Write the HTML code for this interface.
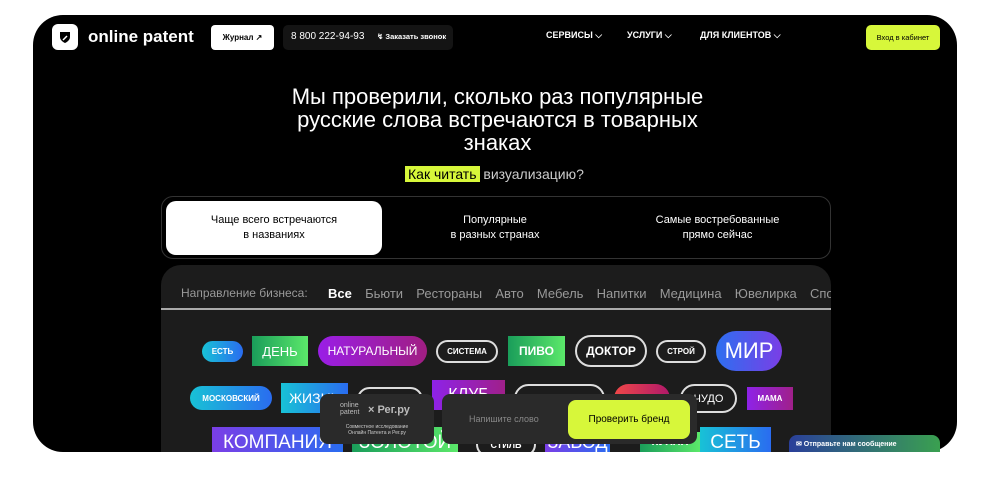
<!DOCTYPE html>
<html><head><meta charset="utf-8"><style>
*{margin:0;padding:0;box-sizing:border-box}
body{width:999px;height:492px;background:#fff;font-family:"Liberation Sans",sans-serif;position:relative;overflow:hidden}
.main{position:absolute;left:33px;top:15px;width:924px;height:437px;background:#000;border-radius:30px;overflow:hidden}
.a{position:absolute}
.c{display:flex;align-items:center;justify-content:center;color:#fff;font-weight:bold;white-space:nowrap;overflow:hidden}
.o{border:2px solid #ddd;border-radius:20px}
.p{border-radius:20px}
.nav{color:#fff;font-size:9px;font-weight:bold;top:30px}
</style></head><body>
<div class="main"></div>
<!-- header -->
<div class="a" style="left:52px;top:24px;width:26px;height:26px;background:#fff;border-radius:6px"></div>
<svg class="a" style="left:58px;top:30px" width="14" height="14" viewBox="0 0 14 14"><path d="M2 2h10v5c0 3-3 5-5 6-2-1-5-3-5-6z" fill="#000"/><path d="M5 10l4-4" stroke="#fff" stroke-width="1.5"/></svg>
<div class="a" style="left:88px;top:27px;color:#fff;font-size:17px;font-weight:bold">online patent</div>
<div class="a c" style="left:211px;top:25px;width:63px;height:25px;background:#fff;border-radius:4px;color:#000;font-size:8px">Журнал&nbsp;↗</div>
<div class="a" style="left:283px;top:25px;width:170px;height:25px;background:#141414;border-radius:5px"></div>
<div class="a" style="left:291px;top:31px;color:#fff;font-size:10px">8 800 222-94-93</div>
<div class="a" style="left:377px;top:32px;color:#fff;font-size:7.5px;font-weight:bold">↯ Заказать звонок</div>
<div class="a nav" style="left:546px">СЕРВИСЫ ⌵</div>
<div class="a nav" style="left:627px">УСЛУГИ ⌵</div>
<div class="a nav" style="left:700px">ДЛЯ КЛИЕНТОВ ⌵</div>
<div class="a c" style="left:866px;top:25px;width:74px;height:25px;background:#d7f73a;border-radius:5px;color:#000;font-size:7.5px;font-weight:normal">Вход в кабинет</div>
<!-- title -->
<div class="a" style="left:200px;top:85px;width:595px;text-align:center;color:#fff;font-size:22px;line-height:23px">Мы проверили, сколько раз популярные<br>русские слова встречаются в товарных<br>знаках</div>
<div class="a" style="left:405px;top:166px;color:#ccc;font-size:14px"><span style="background:#d7f73a;color:#000;padding:0 3px">Как читать</span> визуализацию?</div>
<!-- tabs -->
<div class="a" style="left:161px;top:196px;width:670px;height:63px;border:1px solid #333;border-radius:12px"></div>
<div class="a c" style="left:166px;top:201px;width:216px;height:54px;background:#fff;border-radius:10px;color:#000;font-size:11px;font-weight:normal;text-align:center;line-height:15px">Чаще всего встречаются<br>в названиях</div>
<div class="a c" style="left:400px;top:201px;width:190px;height:54px;font-size:11px;font-weight:normal;text-align:center;line-height:15px">Популярные<br>в разных странах</div>
<div class="a c" style="left:620px;top:201px;width:195px;height:54px;font-size:11px;font-weight:normal;text-align:center;line-height:15px">Самые востребованные<br>прямо сейчас</div>
<!-- panel -->
<div class="a" style="left:161px;top:265px;width:670px;height:200px;background:#1c1c1c;border-radius:20px 20px 0 0;overflow:hidden">
<div class="a" style="left:20px;top:21px;color:#999;font-size:12px;white-space:nowrap">Направление бизнеса:</div>
<div class="a" style="left:167px;top:21px;color:#999;font-size:13px;white-space:nowrap;word-spacing:3px"><b style="color:#fff">Все</b>&nbsp; Бьюти &nbsp;Рестораны &nbsp;Авто &nbsp;Мебель &nbsp;Напитки &nbsp;Медицина &nbsp;Ювелирка &nbsp;Спорт</div>
<div class="a" style="left:0;top:43px;width:670px;height:2px;background:#aaa"></div>
</div>
<!-- words row1 -->
<div class="a c p" style="left:202px;top:341px;width:41px;height:21px;background:linear-gradient(90deg,#18c2d6,#2a6cf0);font-size:8px">ЕСТЬ</div>
<div class="a c" style="left:252px;top:336px;width:56px;height:30px;background:linear-gradient(90deg,#1a9d5a,#5be86a);font-size:13px;font-weight:normal">ДЕНЬ</div>
<div class="a c p" style="left:318px;top:336px;width:109px;height:30px;background:linear-gradient(90deg,#9a1ee6,#a01e82);font-size:12px;font-weight:normal">НАТУРАЛЬНЫЙ</div>
<div class="a c o" style="left:436px;top:340px;width:62px;height:23px;font-size:8px">СИСТЕМА</div>
<div class="a c" style="left:508px;top:336px;width:57px;height:30px;background:linear-gradient(90deg,#1a9d5a,#5be86a);font-size:12px">ПИВО</div>
<div class="a c o" style="left:575px;top:335px;width:72px;height:32px;font-size:12px">ДОКТОР</div>
<div class="a c o" style="left:656px;top:340px;width:50px;height:23px;font-size:8px">СТРОЙ</div>
<div class="a c p" style="left:716px;top:331px;width:66px;height:40px;background:linear-gradient(90deg,#2d6ff0,#7a3ee6);font-size:22px;font-weight:normal">МИР</div>
<!-- row2 -->
<div class="a c p" style="left:190px;top:386px;width:82px;height:24px;background:linear-gradient(90deg,#18c2d6,#2a6cf0);font-size:8px">МОСКОВСКИЙ</div>
<div class="a c" style="left:281px;top:383px;width:67px;height:30px;background:linear-gradient(90deg,#18c2d6,#2a6cf0);font-size:14px;font-weight:normal">ЖИЗНЬ</div>
<div class="a o" style="left:357px;top:387px;width:66px;height:25px"></div>
<div class="a c" style="left:432px;top:380px;width:73px;height:30px;background:linear-gradient(90deg,#8e22e8,#a0208a);font-size:16px;font-weight:normal">КЛУБ</div>
<div class="a o" style="left:514px;top:384px;width:91px;height:29px"></div>
<div class="a p" style="left:614px;top:384px;width:56px;height:29px;background:linear-gradient(90deg,#f04848,#b0186a)"></div>
<div class="a c o" style="left:680px;top:384px;width:57px;height:29px;font-size:11px;font-weight:normal">ЧУДО</div>
<div class="a c" style="left:747px;top:387px;width:46px;height:23px;background:linear-gradient(90deg,#8e22e8,#a0208a);font-size:8px">МАМА</div>
<!-- row3 -->
<div class="a c" style="left:212px;top:427px;width:131px;height:30px;background:linear-gradient(90deg,#7a3ee6,#2a6cf0);font-size:19px;font-weight:normal;align-items:flex-start;padding-top:5px">КОМПАНИЯ</div>
<div class="a c" style="left:352px;top:427px;width:106px;height:30px;background:linear-gradient(90deg,#1a9d5a,#5be86a);font-size:19px;font-weight:normal;align-items:flex-start;padding-top:5px">ЗОЛОТОЙ</div>
<div class="a c o" style="left:476px;top:432px;width:60px;height:25px;font-size:9px">СТИЛЬ</div>
<div class="a c" style="left:545px;top:427px;width:65px;height:30px;background:linear-gradient(90deg,#7a3ee6,#2a6cf0);font-size:18px;font-weight:normal;align-items:flex-start;padding-top:5px">ЗАВОД</div>
<div class="a c" style="left:640px;top:432px;width:60px;height:25px;background:linear-gradient(90deg,#1a9d5a,#5be86a);font-size:11px;align-items:flex-start;padding-top:4px">КУХНЯ</div>
<div class="a c" style="left:700px;top:427px;width:71px;height:30px;background:linear-gradient(90deg,#18c2d6,#2a6cf0);font-size:19px;font-weight:normal;align-items:flex-start;padding-top:5px">СЕТЬ</div>
<!-- overlay -->
<div class="a" style="left:320px;top:394px;width:114px;height:50px;background:#2a2a2a;border-radius:8px"></div>
<div class="a" style="left:340px;top:402px;color:#bbb;font-size:7px;line-height:7px">online<br>patent</div>
<div class="a" style="left:368px;top:404px;color:#bbb;font-size:11px;font-weight:bold">× Рег.ру</div>
<div class="a" style="left:322px;top:424px;width:110px;text-align:center;color:#ccc;font-size:5px;line-height:6px">Совместное исследование<br>Онлайн Патента и Рег.ру</div>
<div class="a" style="left:442px;top:394px;width:255px;height:50px;background:#2a2a2a;border-radius:8px"></div>
<div class="a" style="left:469px;top:414px;color:#888;font-size:9px">Напишите слово</div>
<div class="a c" style="left:568px;top:400px;width:122px;height:39px;background:#d7f73a;border-radius:8px;color:#000;font-size:10px;font-weight:normal">Проверить бренд</div>
<!-- chat -->
<div class="a" style="left:789px;top:435px;width:151px;height:20px;background:linear-gradient(90deg,#2a3f9a,#3aa050);border-radius:8px 8px 0 0"></div>
<div class="a" style="left:796px;top:440px;color:#fff;font-size:7px;font-weight:bold">✉ Отправьте нам сообщение</div>
<div class="a" style="left:0;top:452px;width:999px;height:40px;background:#fff"></div>
</body></html>
